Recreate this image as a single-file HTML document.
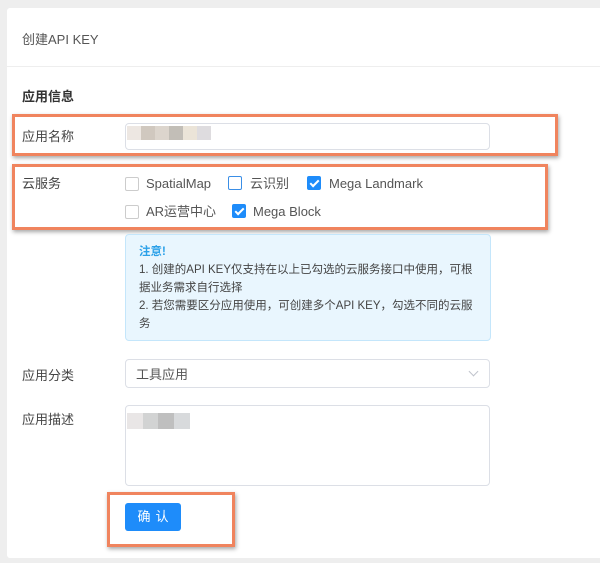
<!DOCTYPE html>
<html><head><meta charset="utf-8"><style>
body{margin:0;width:600px;height:563px;background:#eeeeee;font-family:"Liberation Sans","Noto Sans CJK SC",sans-serif;position:relative;overflow:hidden;color:#333}
.card{position:absolute;left:7px;top:8px;width:600px;height:550px;background:#fff;border-radius:3px}
.a{position:absolute}
.t{font-size:13px;color:#444;line-height:16px;height:16px}
.inp{position:absolute;left:125px;width:363px;border:1px solid #dcdfe6;border-radius:4px;background:#fff}
.cb{position:absolute;width:12px;height:12px;border:1px solid #ccc;border-radius:2px;background:#fff}
.cb.on{background:#1e8cfa;border-color:#1e8cfa}
.cb.blue{border-color:#3a8ee6}
.cb.on:after{content:"";position:absolute;left:3.5px;top:0.5px;width:3px;height:7px;border:solid #fff;border-width:0 2px 2px 0;transform:rotate(45deg)}
.ob{position:absolute;border:3px solid #f0845e;box-shadow:1px 2px 4px rgba(0,0,0,.35)}
.blur{position:absolute;height:14px}
</style></head><body>
<div class="card"></div>
<div class="a t" style="left:22px;top:32px;color:#555">创建API KEY</div>
<div class="a" style="left:7px;top:66px;width:593px;height:1px;background:#eeeeee"></div>
<div class="a t" style="left:22px;top:89px;font-weight:bold;color:#333">应用信息</div>

<div class="a t" style="left:22px;top:129px">应用名称</div>
<div class="inp" style="top:123px;height:25px"></div>
<div class="blur" style="left:127px;top:126px;width:14px;background:#ede7e2"></div>
<div class="blur" style="left:141px;top:126px;width:14px;background:#d0c8bf"></div>
<div class="blur" style="left:155px;top:126px;width:14px;background:#dcd5cd"></div>
<div class="blur" style="left:169px;top:126px;width:14px;background:#c2beb7"></div>
<div class="blur" style="left:183px;top:126px;width:14px;background:#ebe4d8"></div>
<div class="blur" style="left:197px;top:126px;width:14px;background:#dedcdf"></div>
<div class="ob" style="left:12px;top:114px;width:540px;height:36px"></div>

<div class="a t" style="left:22px;top:176px">云服务</div>
<div class="cb" style="left:125px;top:177px"></div><div class="a t" style="left:146px;top:176px;color:#555">SpatialMap</div>
<div class="cb blue" style="left:228px;top:176px"></div><div class="a t" style="left:250px;top:176px;color:#555">云识别</div>
<div class="cb on" style="left:307px;top:176px"></div><div class="a t" style="left:329px;top:176px;color:#555">Mega Landmark</div>
<div class="cb" style="left:125px;top:205px"></div><div class="a t" style="left:146px;top:204px;color:#555">AR运营中心</div>
<div class="cb on" style="left:232px;top:204px"></div><div class="a t" style="left:253px;top:204px;color:#555">Mega Block</div>
<div class="ob" style="left:12px;top:164px;width:530px;height:60px"></div>

<div class="a" style="left:125px;top:234px;width:364px;height:105px;background:#e9f6fe;border:1px solid #c4e6fb;border-radius:4px"></div>
<div class="a" style="left:139px;top:243px;font-size:11.5px;line-height:18px;color:#444;width:340px">
<div style="color:#2aa0e8;font-weight:bold">注意!</div>
<div>1. 创建的API KEY仅支持在以上已勾选的云服务接口中使用，可根据业务需求自行选择</div>
<div>2. 若您需要区分应用使用，可创建多个API KEY，勾选不同的云服务</div>
</div>

<div class="a t" style="left:22px;top:368px">应用分类</div>
<div class="inp" style="top:359px;height:27px"></div>
<div class="a t" style="left:136px;top:367px;color:#555">工具应用</div>
<div class="a" style="left:470px;top:368px;width:6px;height:6px;border:solid #c0c4cc;border-width:0 1px 1px 0;transform:rotate(45deg)"></div>

<div class="a t" style="left:22px;top:412px">应用描述</div>
<div class="inp" style="top:405px;height:79px"></div>
<div class="blur" style="left:127px;top:413px;width:16px;height:16px;background:#e9e6e6"></div>
<div class="blur" style="left:143px;top:413px;width:15px;height:16px;background:#d2d3d3"></div>
<div class="blur" style="left:158px;top:413px;width:16px;height:16px;background:#bfbfbf"></div>
<div class="blur" style="left:174px;top:413px;width:16px;height:16px;background:#d8dadc"></div>

<div class="a" style="left:125px;top:503px;width:56px;height:28px;background:#1e8cfa;border-radius:3px;color:#fff;font-size:13px;text-align:center;line-height:28px;letter-spacing:5px;text-indent:5px">确认</div>
<div class="ob" style="left:107px;top:492px;width:122px;height:49px"></div>
</body></html>
